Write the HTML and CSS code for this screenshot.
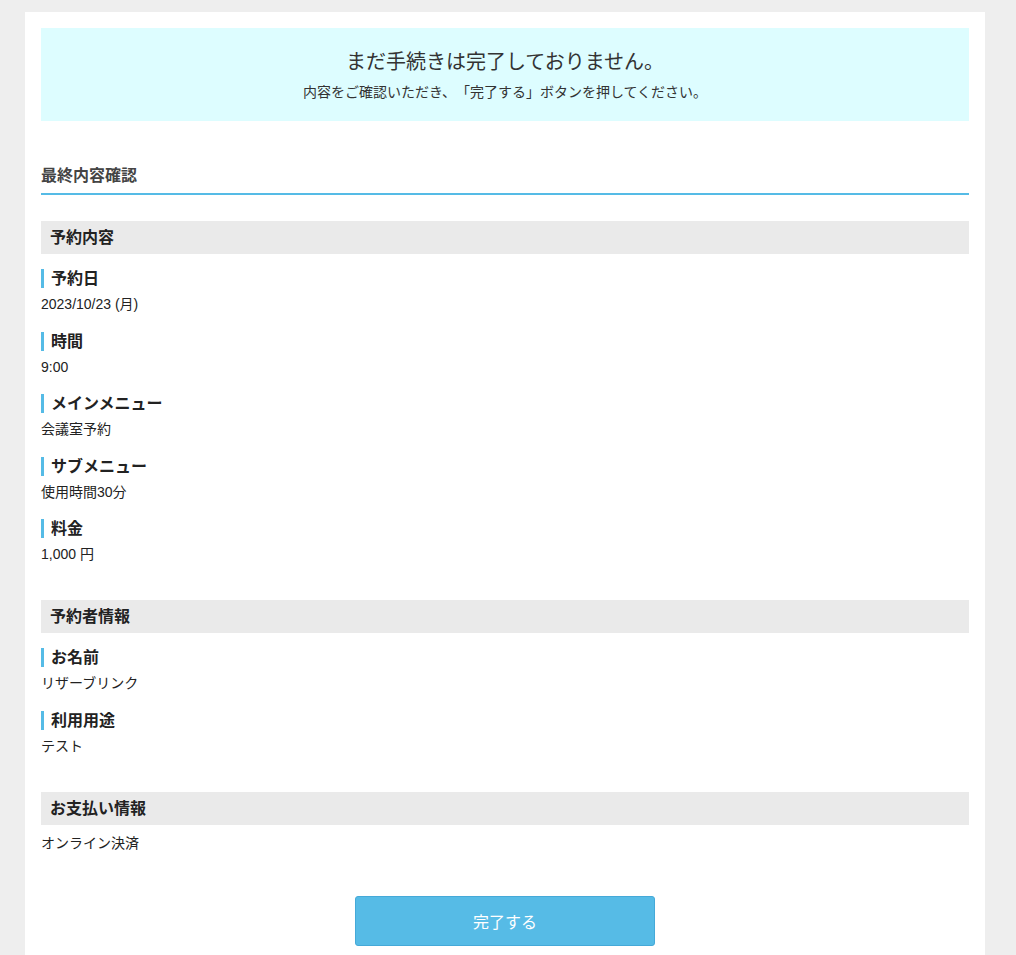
FILE: index.html
```html
<!DOCTYPE html>
<html lang="ja">
<head>
    <meta charset="UTF-8">
    <meta name="viewport" content="width=device-width, initial-scale=1.0">
    <title>最終内容確認</title>
    <link rel="stylesheet" href="styles.css">
</head>
<body>
    <div class="card">
        <div class="notice">
            <p class="notice-title">まだ手続きは完了しておりません。</p>
            <p class="notice-text">内容をご確認いただき、「完了する」ボタンを押してください。</p>
        </div>

        <h2 class="page-heading">最終内容確認</h2>

        <div class="section">
            <h3 class="section-title">予約内容</h3>
            <div class="item">
                <div class="item-label">予約日</div>
                <div class="item-value">2023/10/23 (月)</div>
            </div>
            <div class="item">
                <div class="item-label">時間</div>
                <div class="item-value">9:00</div>
            </div>
            <div class="item">
                <div class="item-label">メインメニュー</div>
                <div class="item-value">会議室予約</div>
            </div>
            <div class="item">
                <div class="item-label">サブメニュー</div>
                <div class="item-value">使用時間30分</div>
            </div>
            <div class="item">
                <div class="item-label">料金</div>
                <div class="item-value">1,000 円</div>
            </div>
        </div>

        <div class="section">
            <h3 class="section-title">予約者情報</h3>
            <div class="item">
                <div class="item-label">お名前</div>
                <div class="item-value">リザーブリンク</div>
            </div>
            <div class="item">
                <div class="item-label">利用用途</div>
                <div class="item-value">テスト</div>
            </div>
        </div>

        <div class="section">
            <h3 class="section-title">お支払い情報</h3>
            <div class="payment-value">オンライン決済</div>
        </div>

        <div class="actions">
            <button type="button" class="button-submit">完了する</button>
        </div>
    </div>
</body>
</html>
```

FILE: styles.css
```css
body {
    font-family: "Liberation Sans", "Noto Sans CJK JP", sans-serif;
    text-spacing-trim: space-all;
    background-color: #eeeeee;
    color: #222222;
    margin: 0;
    padding: 12px 0 0 25px;
}

.card {
    width: 928px;
    min-height: 960px;
    background-color: #ffffff;
    padding: 16px;
}

.notice {
    background-color: #ddfdff;
    padding: 20px 0 19px;
    text-align: center;
    color: #333333;
}

.notice p {
    margin: 0;
}

.notice-title {
    font-size: 20px;
    line-height: 28px;
}

.notice-text {
    font-size: 14px;
    line-height: 20px;
    margin-top: 6px !important;
}

.page-heading {
    margin: 44px 0 0;
    padding-bottom: 6px;
    font-size: 16px;
    line-height: 22px;
    color: #444444;
    border-bottom: 2px solid #55bbe6;
}

.section {
    margin-top: 35px;
}

.page-heading + .section {
    margin-top: 26px;
}

.section-title {
    margin: 0;
    padding: 0 9px;
    font-size: 16px;
    line-height: 33px;
    background-color: #eaeaea;
    color: #222222;
}

.item {
    margin-top: 16.5px;
}

.section-title + .item {
    margin-top: 15px;
}

.item-label {
    font-size: 16px;
    font-weight: bold;
    line-height: 19px;
    border-left: 3px solid #55bbe6;
    padding-left: 7px;
}

.item-value {
    margin-top: 5px;
    font-size: 14px;
    line-height: 22px;
}

.payment-value {
    margin-top: 7.5px;
    font-size: 14px;
    line-height: 22px;
}

.actions {
    margin-top: 42px;
    text-align: center;
}

.button-submit {
    width: 300px;
    height: 50px;
    font-family: inherit;
    font-size: 16px;
    color: #ffffff;
    background-color: #56bbe6;
    border: 1px solid #45a9d8;
    border-radius: 3px;
    cursor: pointer;
}
```
